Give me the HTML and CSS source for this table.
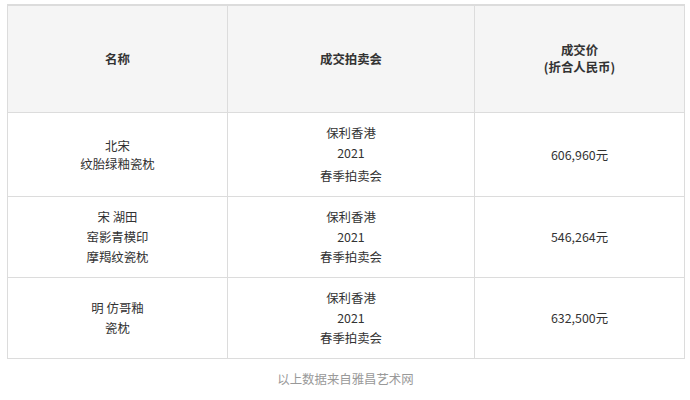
FILE: index.html
```html
<!DOCTYPE html>
<html lang="zh">
<head>
<meta charset="utf-8">
<link rel="stylesheet" href="styles.css">
</head>
<body>
<div class="wrap">
  <table class="price-table">
    <colgroup>
      <col class="c1"><col class="c2"><col class="c3">
    </colgroup>
    <thead>
      <tr class="head">
        <th>名称</th>
        <th>成交拍卖会</th>
        <th><div class="two">成交价<br>(折合人民币)</div></th>
      </tr>
    </thead>
    <tbody>
      <tr class="r1">
        <td><div class="tight">北宋<br>纹胎绿釉瓷枕</div></td>
        <td><div>保利香港</div><div>2021</div><div class="gap">春季拍卖会</div></td>
        <td>606,960元</td>
      </tr>
      <tr class="r2">
        <td>宋 湖田<br>窑影青模印<br>摩羯纹瓷枕</td>
        <td>保利香港<br>2021<br>春季拍卖会</td>
        <td>546,264元</td>
      </tr>
      <tr class="r3">
        <td>明 仿哥釉<br>瓷枕</td>
        <td>保利香港<br>2021<br>春季拍卖会</td>
        <td>632,500元</td>
      </tr>
    </tbody>
  </table>
  <p class="source">以上数据来自雅昌艺术网</p>
</div>
</body>
</html>
```

FILE: styles.css
```css
html, body {
  margin: 0;
  padding: 0;
  background: #fff;
}
body {
  font-family: "Noto Sans CJK SC", "Noto Sans", sans-serif;
  font-size: 12.4px;
  color: #333;
}
.wrap {
  padding: 4px 6px 0 7px;
}
.price-table {
  width: 677px;
  table-layout: fixed;
  border-collapse: collapse;
  border-top: 2px solid #dcdcdc;
}
.c1 { width: 220px; }
.c2 { width: 247px; }
.c3 { width: 210px; }
.price-table th,
.price-table td {
  border: 1px solid #dcdcdc;
  text-align: center;
  vertical-align: middle;
  padding: 0;
  line-height: 20px;
}
.price-table th {
  background: #f5f5f5;
  font-weight: bold;
  height: 106px;
}
.price-table .two {
  line-height: 17px;
}
.r1 td { height: 83px; }
.r2 td, .r3 td { height: 80px; }
.tight { line-height: 18px; }
.gap { margin-top: 3px; }
.source {
  margin: 10px 0 0;
  text-align: center;
  color: #999;
  font-size: 12.4px;
  line-height: 20px;
}
```
